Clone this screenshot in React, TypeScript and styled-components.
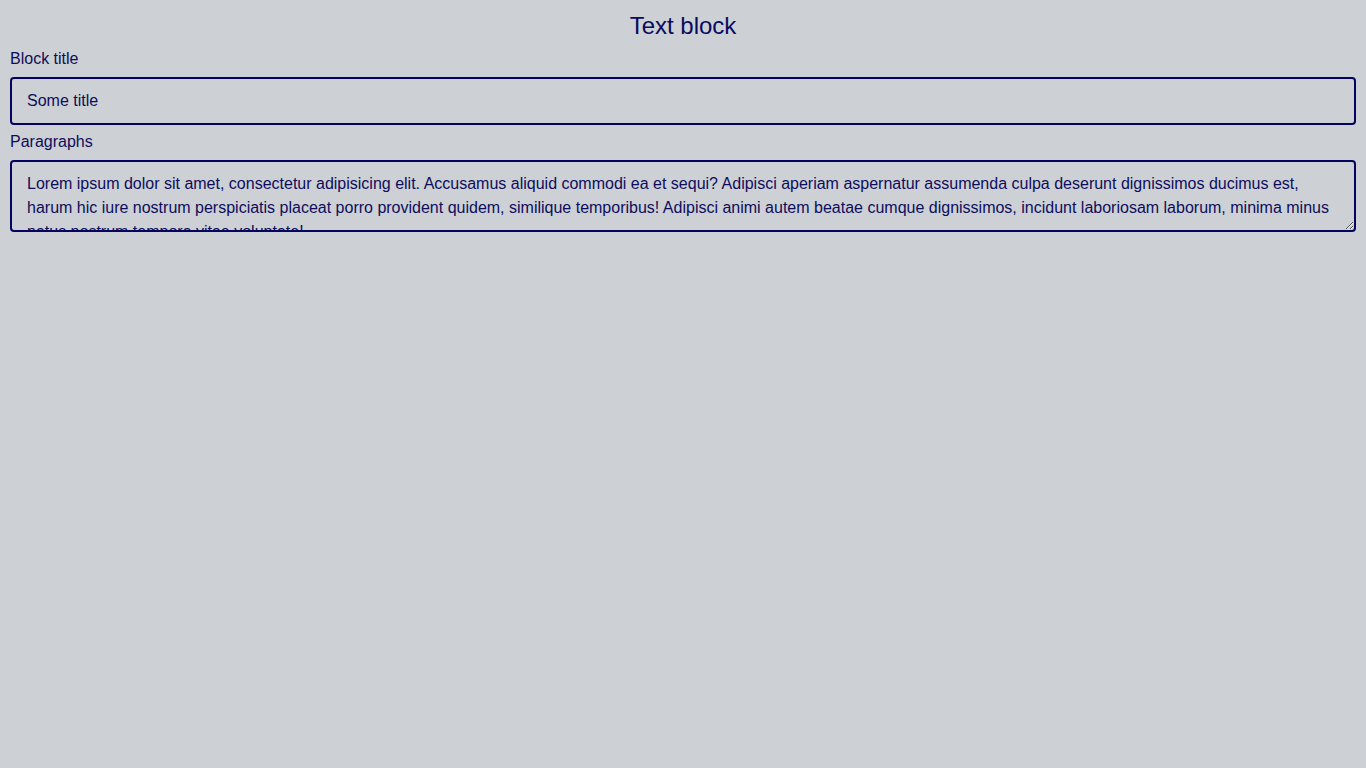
import styled, { createGlobalStyle } from 'styled-components'

const GlobalStyle = createGlobalStyle`
  html, body {
    margin: 0;
    background: #cdd1d5;
  }
  body {
    font-family: "Liberation Sans", Arial, sans-serif;
    color: #0d0d5c;
  }
`

const Page = styled.div`
  padding: 0 10px;
  display: flex;
  flex-direction: column;
`

const Title = styled.h1`
  margin: 12px 0 10px;
  font-size: 24px;
  line-height: 28px;
  font-weight: 400;
  text-align: center;
  color: #0a0a5e;
`

const Label = styled.label`
  display: block;
  font-size: 16px;
  line-height: 18px;
  margin-bottom: 9px;
`

const Field = styled.input`
  box-sizing: border-box;
  width: 100%;
  height: 48px;
  padding: 0 15px;
  margin: 0 0 8px;
  border: 2px solid #04045f;
  border-radius: 4px;
  background: transparent;
  font: 16px "Liberation Sans", Arial, sans-serif;
  color: #0d0d5c;
  outline: none;
`

const Area = styled.textarea`
  box-sizing: border-box;
  display: block;
  width: 100%;
  height: 72px;
  padding: 10px 15px 8px;
  margin: 0;
  border: 2px solid #04045f;
  border-radius: 4px;
  background: transparent;
  font: 16px/24px "Liberation Sans", Arial, sans-serif;
  color: #0d0d5c;
  outline: none;
  overflow: hidden;
`

const text =
  'Lorem ipsum dolor sit amet, consectetur adipisicing elit. Accusamus aliquid commodi ea et sequi? Adipisci aperiam aspernatur assumenda culpa deserunt dignissimos ducimus est, harum hic iure nostrum perspiciatis placeat porro provident quidem, similique temporibus! Adipisci animi autem beatae cumque dignissimos, incidunt laboriosam laborum, minima minus natus nostrum tempora vitae voluptate!'

export default function App() {
  return (
    <>
      <GlobalStyle />
      <Page>
        <Title>Text block</Title>
        <Label htmlFor="title">Block title</Label>
        <Field id="title" defaultValue="Some title" />
        <Label htmlFor="paras">Paragraphs</Label>
        <Area id="paras" defaultValue={text} />
      </Page>
    </>
  )
}
